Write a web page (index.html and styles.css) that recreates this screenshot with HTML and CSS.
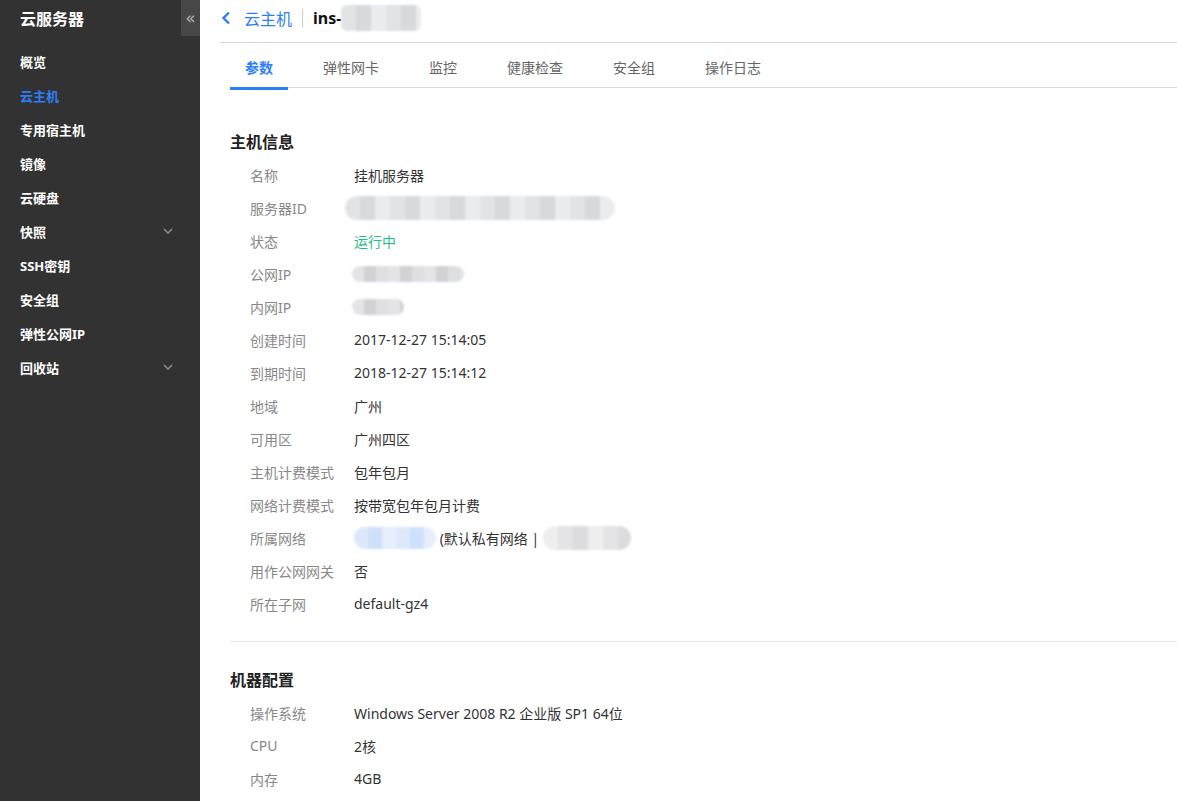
FILE: index.html
```html
<!DOCTYPE html>
<html>

<head>
	<meta charset="utf-8">
	<meta name="viewport" content="width=device-width, initial-scale=1.0">
	<title>云服务器 - 云主机</title>
	<link rel="stylesheet" href="styles.css">
</head>

<body>
	<div class="sidebar">
		<div class="side-title">
			<span>云服务器</span>
			<button class="collapse">«</button>
		</div>
		<ul class="menu">
			<li>概览</li>
			<li class="active">云主机</li>
			<li>专用宿主机</li>
			<li>镜像</li>
			<li>云硬盘</li>
			<li>快照
				<svg class="chev" width="10" height="6" viewBox="0 0 10 6"><path d="M1 1l4 4 4-4" fill="none" stroke="#8a8a8a" stroke-width="1.6"/></svg>
			</li>
			<li>SSH密钥</li>
			<li>安全组</li>
			<li>弹性公网IP</li>
			<li>回收站
				<svg class="chev" width="10" height="6" viewBox="0 0 10 6"><path d="M1 1l4 4 4-4" fill="none" stroke="#8a8a8a" stroke-width="1.6"/></svg>
			</li>
		</ul>
	</div>

	<div class="main">
		<div class="header">
			<svg class="back" width="10" height="14" viewBox="0 0 10 14"><path d="M8 1.5L2.5 7 8 12.5" fill="none" stroke="#2d7ff9" stroke-width="2.4"/></svg>
			<a class="crumb">云主机</a>
			<span class="sep"></span>
			<span class="ins">ins-</span>
			<span class="blur w80"></span>
		</div>

		<ul class="tabs">
			<li class="active">参数</li>
			<li>弹性网卡</li>
			<li>监控</li>
			<li>健康检查</li>
			<li>安全组</li>
			<li>操作日志</li>
		</ul>

		<div class="section first">
			<h3>主机信息</h3>
			<div class="row"><span class="label">名称</span><span class="value">挂机服务器</span></div>
			<div class="row"><span class="label">服务器ID</span><span class="value"><span class="blur w270"></span></span></div>
			<div class="row"><span class="label">状态</span><span class="value green">运行中</span></div>
			<div class="row"><span class="label">公网IP</span><span class="value"><span class="blur w112 thin"></span></span></div>
			<div class="row"><span class="label">内网IP</span><span class="value"><span class="blur w52 thin"></span></span></div>
			<div class="row"><span class="label">创建时间</span><span class="value">2017-12-27 15:14:05</span></div>
			<div class="row"><span class="label">到期时间</span><span class="value">2018-12-27 15:14:12</span></div>
			<div class="row"><span class="label">地域</span><span class="value">广州</span></div>
			<div class="row"><span class="label">可用区</span><span class="value">广州四区</span></div>
			<div class="row"><span class="label">主机计费模式</span><span class="value">包年包月</span></div>
			<div class="row"><span class="label">网络计费模式</span><span class="value">按带宽包年包月计费</span></div>
			<div class="row"><span class="label">所属网络</span><span class="value"><span class="blur blue w82"></span> (默认私有网络 | <span class="blur w88"></span></span></div>
			<div class="row"><span class="label">用作公网网关</span><span class="value">否</span></div>
			<div class="row"><span class="label">所在子网</span><span class="value">default-gz4</span></div>
		</div>

		<div class="section">
			<h3>机器配置</h3>
			<div class="row"><span class="label">操作系统</span><span class="value">Windows Server 2008 R2 企业版 SP1 64位</span></div>
			<div class="row"><span class="label">CPU</span><span class="value">2核</span></div>
			<div class="row"><span class="label">内存</span><span class="value">4GB</span></div>
		</div>
	</div>
</body>

</html>
```

FILE: styles.css
```css
* {
	margin: 0;
	padding: 0;
	box-sizing: border-box;
	font-family: "Noto Sans", "Noto Sans CJK SC", sans-serif;
}

body {
	width: 100%;
	height: 100vh;
	overflow: hidden;
	display: flex;
	background: #fff;
	color: #333;
}

ul {
	list-style: none;
}

/* sidebar */
.sidebar {
	width: 200px;
	flex-shrink: 0;
	background: #323232;
	color: #fff;
}

.side-title {
	display: flex;
	height: 36px;
	align-items: center;
	padding-left: 20px;
	font-size: 16px;
	font-weight: 700;
}

.collapse {
	margin-left: auto;
	width: 19px;
	height: 36px;
	border: none;
	background: #474747;
	color: #b0b0b0;
	font-size: 17px;
	line-height: 30px;
	font-family: "DejaVu Sans", sans-serif;
}

.menu {
	margin-top: 8px;
}

.menu li {
	display: flex;
	align-items: center;
	height: 34px;
	padding: 0 27px 0 20px;
	font-size: 13px;
	font-weight: 700;
}

.menu li.active {
	color: #2d7ff9;
}

.chev {
	margin-left: auto;
}

/* main */
.main {
	flex: 1;
	padding-left: 20px;
}

.header {
	display: flex;
	align-items: center;
	height: 43px;
	border-bottom: 1px solid #d6d6d6;
	padding-bottom: 6px;
}

.back {
	margin-left: 1px;
	margin-right: 13px;
}

.crumb {
	color: #2d7ff9;
	font-size: 16px;
}

.sep {
	width: 1px;
	height: 18px;
	background: #ccc;
	margin: 0 10px;
}

.ins {
	font-size: 16px;
	font-weight: 700;
	color: #111;
}

.tabs {
	display: flex;
	gap: 20px;
	margin-left: 10px;
	height: 45px;
	border-bottom: 1px solid #dcdcdc;
}

.tabs li {
	padding: 0 15px;
	font-size: 14px;
	line-height: 50px;
	height: 47px;
	color: #666;
	border-bottom: 3px solid transparent;
	margin-bottom: -2px;
}

.tabs li.active {
	color: #2d7ff9;
	font-weight: 700;
	border-bottom-color: #2d7ff9;
}

.section {
	margin-left: 10px;
	padding-top: 26px;
	padding-bottom: 20px;
}

.section.first {
	padding-top: 42px;
	padding-bottom: 21px;
	border-bottom: 1px solid #e8e8e8;
}

.section h3 {
	font-size: 16px;
	line-height: 24px;
	font-weight: 700;
	color: #222;
	margin-bottom: 4px;
}

.row {
	display: flex;
	align-items: center;
	height: 33px;
	padding-left: 20px;
	font-size: 14px;
}

.label {
	width: 104px;
	color: #888;
}

.value {
	display: flex;
	align-items: center;
	color: #333;
	white-space: pre;
}

.green {
	color: #1fbf84;
}

/* masked values */
.blur {
	display: inline-block;
	height: 24px;
	border-radius: 12px;
	background: repeating-linear-gradient(90deg, #e2e3e5 0 15px, #d8d9db 15px 30px, #ebeced 30px 45px);
	filter: blur(1px);
}

.blur.thin {
	height: 16px;
	border-radius: 8px;
	background: repeating-linear-gradient(90deg, #e4e4e6 0 12px, #d2d2d4 12px 24px, #dedfe1 24px 36px);
}

.blur.blue {
	height: 22px;
	background: repeating-linear-gradient(90deg, #dde9fb 0 14px, #cfe0fa 14px 28px, #e6effc 28px 42px);
}

.w80 {
	width: 80px;
	border-radius: 6px;
	height: 26px;
}

.w270 {
	width: 270px;
	margin-left: -9px;
}

.w112 {
	width: 112px;
	margin-left: -2px;
}

.w52 {
	width: 52px;
	margin-left: -2px;
}

.w82 {
	width: 82px;
}

.w88 {
	width: 88px;
	background: repeating-linear-gradient(90deg, #eeeeef 0 15px, #e4e4e6 15px 30px, #dcdcde 30px 45px);
}
```
